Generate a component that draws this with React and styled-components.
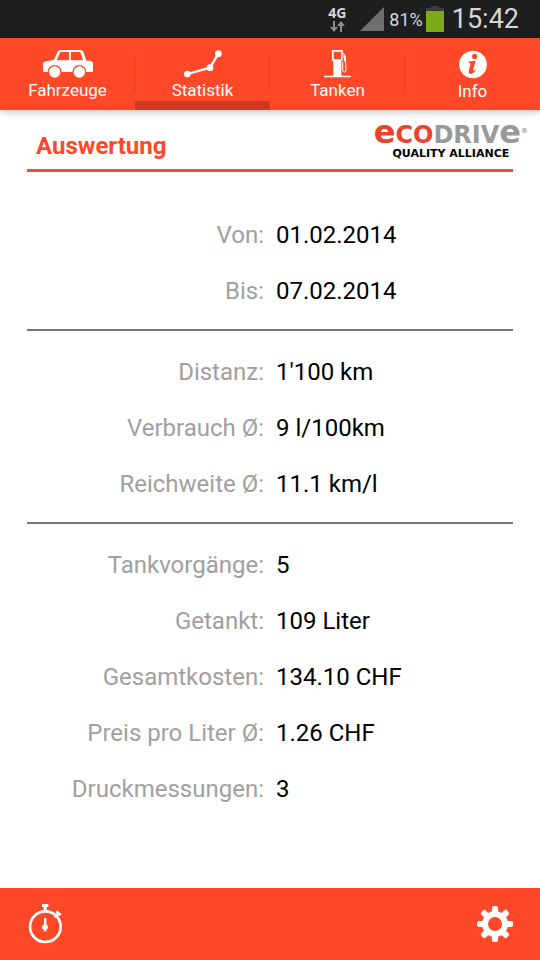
import React from 'react'

import styled, { createGlobalStyle } from 'styled-components'

const ORANGE = '#ff4828'

const GlobalStyle = createGlobalStyle`
* {
  box-sizing: border-box;
}
body {
  margin: 0;
  background: #fff;
  font-family: Roboto, "Liberation Sans", sans-serif;
}
button {
  border: none;
  padding: 0;
  background: none;
  color: inherit;
  font-family: inherit;
  cursor: pointer;
}
svg {
  display: block;
}
`
const Page = styled.div`
display: flex;
flex-direction: column;
min-height: 100vh;
`
const StatusBar = styled.div`
display: flex;
align-items: center;
justify-content: flex-end;
height: 38px;
padding-right: 21px;
background: #1e1e1e;
color: #d6d6d6;
`
const Network = styled.div`
display: flex;
flex-direction: column;
align-items: center;
gap: 2px;
margin-right: 14px;
font: bold 14px/12px "Noto Sans", sans-serif;
`
const Battery = styled.div`
display: flex;
align-items: center;
gap: 3px;
margin-left: 5px;
font-size: 18px;
`
const Clock = styled.time`
margin-left: 8px;
font-size: 27px;
`
const Tabs = styled.nav`
display: flex;
height: 72px;
background: ${ORANGE};
box-shadow: 0 1px 8px rgba(0, 0, 0, 0.3);
`
const Tab = styled.button`
flex: 1;
display: flex;
flex-direction: column;
align-items: center;
gap: 2px;
padding-top: 12px;
border-bottom: 9px solid ${props => (props.$active ? '#d03a1f' : 'transparent')};
color: #fff;
font-size: 17px;
line-height: 20px;
`
const TabDivider = styled.span`
width: 1px;
height: 36px;
margin: 18px 0 0 -1px;
background: #e53f22;
`
const Content = styled.main`
flex: 1;
padding: 0 27px 71px;
`
const Header = styled.header`
display: flex;
justify-content: space-between;
height: 62px;
margin-bottom: 35px;
border-bottom: 3px solid #f24c35;
`
const Title = styled.h1`
margin: 0;
padding: 22px 0 0 9px;
color: ${ORANGE};
font-size: 24px;
line-height: 28px;
`
const Logo = styled.div`
display: flex;
flex-direction: column;
align-items: center;
margin-right: -15px;
padding-top: 12px;
color: #000;
font: bold 11px/12px "DejaVu Sans", sans-serif;
`
const LogoName = styled.div`
display: flex;
align-items: baseline;
height: 26px;
font-size: 24px;
line-height: 20px;
`
const LogoPart = styled.span`
color: ${props => (props.$accent ? '#e8432e' : '#999')};
`
const LogoBig = styled.span`
font-size: 32px;
`
const Registered = styled.span`
align-self: flex-start;
padding-top: 4px;
color: #999;
font-size: 7px;
line-height: 10px;
`
const Group = styled.dl`
margin: 0;

& + & {
  margin-top: 10px;
  padding-top: 13px;
  border-top: 2px solid #777;
}
`
const Row = styled.div`
display: grid;
grid-template-columns: 1fr 1fr;
column-gap: 12px;
font-size: 24px;
line-height: 56px;
`
const Label = styled.dt`
color: #a0a0a0;
text-align: right;
white-space: nowrap;
`
const Value = styled.dd`
margin: 0;
color: #000;
white-space: nowrap;
`
const Footer = styled.footer`
display: flex;
align-items: center;
justify-content: space-between;
height: 72px;
padding: 0 27px;
background: ${ORANGE};
`

const CarIcon = () => (
  <svg width="50" height="28" viewBox="0 0 150 84" fill="#fff">
    <path fillRule="evenodd" d="M0 42Q0 36 8 34L32 30L44 5Q46 0 52 0H112Q119 0 121 5L130 32H140Q150 33 150 42V62Q150 66 146 66H4Q0 66 0 62ZM52 6H78V31H41ZM84 6H112L120 31H84Z" />
    <circle cx="35" cy="66" r="21" fill={ORANGE} />
    <circle cx="109" cy="66" r="21" fill={ORANGE} />
    <circle cx="35" cy="66" r="17" />
    <circle cx="109" cy="66" r="17" />
  </svg>
)
const ChartIcon = () => (
  <svg width="38" height="28" viewBox="0 0 114 84" fill="#fff">
    <path d="M10 72L78 53L103 11" fill="none" stroke="#fff" strokeWidth="7" />
    <circle cx="10" cy="72" r="10" />
    <circle cx="78" cy="53" r="10" />
    <circle cx="103" cy="11" r="10" />
  </svg>
)
const PumpIcon = () => (
  <svg width="27" height="28" viewBox="0 0 81 84" fill="#fff">
    <path fillRule="evenodd" d="M24 0H56V32H52V77H80V82H0V77H28V32H24ZM29 5V28H51V5Z" />
    <path d="M56 8L64 18L66 60Q66 66 61 66Q56 66 56 60V36" fill="none" stroke="#fff" strokeWidth="3" />
    <path d="M58 14L64 20V36L60 32Z" />
  </svg>
)
const InfoIcon = () => (
  <svg width="30" height="30" viewBox="-2 -2 90 90">
    <circle cx="43" cy="43" r="43" fill="#fff" />
    <circle cx="48" cy="18" r="8" fill={ORANGE} />
    <path d="M30 34L52 31L43 60Q42 66 50 59L52 62Q42 74 34 72Q27 70 30 61L35 43Q37 37 29 38Z" fill={ORANGE} />
  </svg>
)
const StopwatchIcon = () => (
  <svg width="36" height="40" viewBox="-3 0 108 120" fill="#fff">
    <circle cx="52" cy="68" r="46" fill="none" stroke="#fff" strokeWidth="8" />
    <path d="M42 0H61V9H56V24H47V9H42Z" />
    <path d="M80 40L92 28M85 22L98 33" stroke="#fff" strokeWidth="8" />
    <path d="M48 42H55V61Q61 65 60 71Q59 75 55 77V82H48V77Q43 75 42 71Q42 65 48 61Z" />
  </svg>
)
const GearIcon = () => (
  <svg width="36" height="36" viewBox="0 0 108 108" fill="#fff">
    {[0, 45, 90, 135].map(angle => (
      <rect key={angle} x="45" y="0" width="18" height="108" rx="6" transform={`rotate(${angle} 54 54)`} />
    ))}
    <circle cx="54" cy="54" r="39" />
    <circle cx="54" cy="54" r="21" fill={ORANGE} />
  </svg>
)
const ArrowsIcon = () => (
  <svg width="15" height="11" viewBox="0 0 15 11" fill="#8c8c8c">
    <path d="M3 0H5V6H8L4 11L0 6H3ZM10 11H12V5H15L11 0L7 5H10Z" />
  </svg>
)
const SignalIcon = () => (
  <svg width="24" height="24" viewBox="0 0 24 24">
    <path d="M24 0V24H0Z" fill="#6e6e6e" />
  </svg>
)
const BatteryIcon = () => (
  <svg width="18" height="26" viewBox="0 0 18 26">
    <path d="M5 0H13V2H18V5H0V2H5Z" fill="#3c3c3c" />
    <rect y="5" width="18" height="21" fill="#7bab17" />
  </svg>
)

const tabs = [
  { name: 'Fahrzeuge', Icon: CarIcon },
  { name: 'Statistik', Icon: ChartIcon, active: true },
  { name: 'Tanken', Icon: PumpIcon },
  { name: 'Info', Icon: InfoIcon },
]

const groups = [
  [
    ['Von:', '01.02.2014'],
    ['Bis:', '07.02.2014'],
  ],
  [
    ['Distanz:', "1'100 km"],
    ['Verbrauch Ø:', '9 l/100km'],
    ['Reichweite Ø:', '11.1 km/l'],
  ],
  [
    ['Tankvorgänge:', '5'],
    ['Getankt:', '109 Liter'],
    ['Gesamtkosten:', '134.10 CHF'],
    ['Preis pro Liter Ø:', '1.26 CHF'],
    ['Druckmessungen:', '3'],
  ],
]

const App = () => {
  return (
    <Page>
      <GlobalStyle />
      <StatusBar>
        <Network>
          4G
          <ArrowsIcon />
        </Network>
        <SignalIcon />
        <Battery>
          81%
          <BatteryIcon />
        </Battery>
        <Clock>15:42</Clock>
      </StatusBar>
      <Tabs>
        {tabs.map(({ name, Icon, active }, i) => (
          <React.Fragment key={name}>
            {i > 0 && <TabDivider />}
            <Tab type="button" $active={active} aria-current={active ? 'page' : undefined}>
              <Icon />
              {name}
            </Tab>
          </React.Fragment>
        ))}
      </Tabs>
      <Content>
        <Header>
          <Title>Auswertung</Title>
          <Logo>
            <LogoName>
              <LogoPart $accent><LogoBig>e</LogoBig>CO</LogoPart>
              <LogoPart>DRIV<LogoBig>e</LogoBig></LogoPart>
              <Registered>®</Registered>
            </LogoName>
            QUALITY ALLIANCE
          </Logo>
        </Header>
        {groups.map((rows, i) => (
          <Group key={i}>
            {rows.map(([label, value]) => (
              <Row key={label}>
                <Label>{label}</Label>
                <Value>{value}</Value>
              </Row>
            ))}
          </Group>
        ))}
      </Content>
      <Footer>
        <button type="button" aria-label="Stoppuhr">
          <StopwatchIcon />
        </button>
        <button type="button" aria-label="Einstellungen">
          <GearIcon />
        </button>
      </Footer>
    </Page>
  )
}
export default App
